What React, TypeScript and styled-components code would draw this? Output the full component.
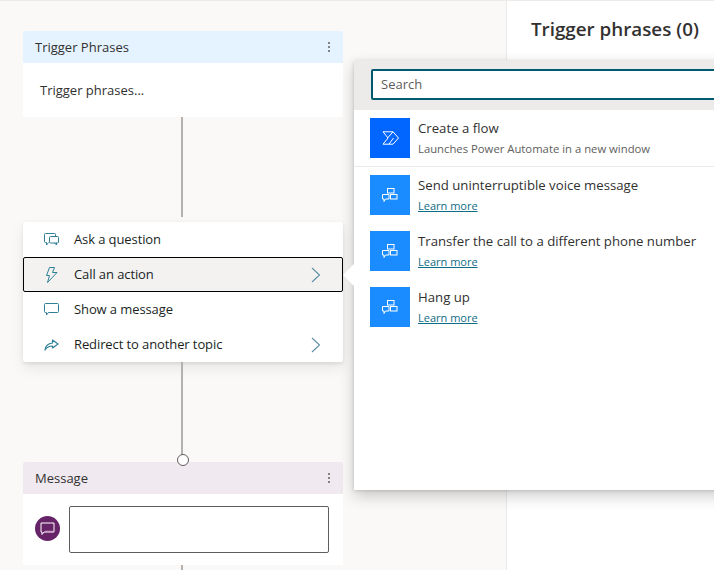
import React from "react";
import styled, { createGlobalStyle } from "styled-components";

const GlobalStyle = createGlobalStyle`
  html, body {
    margin: 0;
    padding: 0;
    height: 100%;
    overflow: hidden;
    background: #ffffff;
    font-family: "Open Sans", "Noto Sans", sans-serif;
  }
  * {
    box-sizing: border-box;
  }
`;

const Page = styled.div`
  position: relative;
  display: flex;
  width: 714px;
  height: 570px;
  overflow: hidden;
  border-top: 1px solid #edebe9;
`;

const Canvas = styled.div`
  display: flex;
  flex-direction: column;
  flex: 0 0 507px;
  padding: 30px 0 0 23px;
  background: #faf9f8;
  border-right: 1px solid #edebe9;
`;

const Card = styled.div`
  flex: none;
  width: 320px;
  background: #ffffff;
  border-radius: 2px 2px 0 0;
`;

const CardHeader = styled.div<{ $tint: string }>`
  display: flex;
  align-items: center;
  justify-content: space-between;
  height: 32px;
  padding: 0 13px 0 12px;
  background: ${(p) => p.$tint};
  border-radius: 2px 2px 0 0;
  font-size: 13px;
  color: #323130;
`;

const MoreDots = styled.span`
  display: flex;
  flex-direction: column;
  gap: 2px;
  & i {
    width: 2px;
    height: 2px;
    border-radius: 50%;
    background: #605e5c;
  }
`;

const TriggerBody = styled.div`
  height: 54px;
  padding: 18px 17px 0;
  font-size: 13px;
  line-height: 18px;
  color: #323130;
`;

const Connector = styled.div<{ $height: number; $dot?: boolean }>`
  position: relative;
  flex: none;
  width: 2px;
  height: ${(p) => p.$height}px;
  margin-left: 158px;
  background: #b3b0ad;
  ${(p) =>
    p.$dot &&
    `
    &::after {
      content: "";
      position: absolute;
      left: -4px;
      bottom: -4px;
      width: 10px;
      height: 10px;
      border-radius: 50%;
      background: #ffffff;
      border: 1px solid #605e5c;
      z-index: 1;
    }
  `}
`;

const Menu = styled.div`
  flex: none;
  width: 320px;
  margin-top: 5px;
  background: #ffffff;
  border-radius: 2px;
  box-shadow: 0 1.6px 3.6px rgba(0, 0, 0, 0.08), 0 6px 14px rgba(0, 0, 0, 0.08);
`;

const MenuRow = styled.div<{ $active?: boolean }>`
  display: flex;
  align-items: center;
  height: 35px;
  padding: 0 21px 0 20px;
  font-size: 13px;
  letter-spacing: -0.1px;
  color: #201f1e;
  border-radius: 2px;
  background: ${(p) => (p.$active ? "#f3f2f1" : "transparent")};
  border: 1px solid ${(p) => (p.$active ? "#000000" : "transparent")};
`;

const MenuIcon = styled.span`
  display: flex;
  flex: none;
  width: 30px;
  color: #2f7f96;
`;

const MenuLabel = styled.span`
  flex: 1;
  padding-bottom: 2px;
`;

const Chevron = styled.svg`
  flex: none;
  width: 10px;
  height: 16px;
  color: #5f8fa5;
`;

const MessageBody = styled.div`
  display: flex;
  align-items: center;
  gap: 9px;
  height: 71px;
  padding: 0 14px 0 12px;
`;

const Avatar = styled.span`
  display: flex;
  align-items: center;
  justify-content: center;
  flex: none;
  width: 25px;
  height: 25px;
  margin-bottom: 2px;
  border-radius: 50%;
  background: #672367;
`;

const MessageBox = styled.div`
  flex: 1;
  height: 47px;
  margin-bottom: 1px;
  border: 1px solid #605e5c;
  border-radius: 2px;
  background: #ffffff;
`;

const SidePanel = styled.div`
  flex: 1;
  padding: 13px 0 0 24px;
  background: #ffffff;
`;

const PanelTitle = styled.div`
  font-size: 18.8px;
  line-height: 30px;
  font-weight: 600;
  color: #323130;
  white-space: nowrap;
`;

const Flyout = styled.div`
  position: absolute;
  left: 354px;
  top: 59px;
  width: 400px;
  height: 430px;
  background: #ffffff;
  box-shadow: 0 6.4px 14.4px rgba(0, 0, 0, 0.2), 0 1.2px 3.6px rgba(0, 0, 0, 0.16);
  &::before {
    content: "";
    position: absolute;
    left: -11px;
    top: 204px;
    width: 0;
    height: 0;
    border-top: 11px solid transparent;
    border-bottom: 11px solid transparent;
    border-right: 11px solid #ffffff;
  }
`;

const SearchBar = styled.div`
  height: 50px;
  padding: 9px 0 0 17px;
  background: #edebe9;
`;

const SearchInput = styled.div`
  display: flex;
  align-items: center;
  height: 31px;
  padding: 0 8px 2px;
  background: #ffffff;
  border: 2px solid #005b70;
  border-radius: 2px 0 0 2px;
  font-size: 13px;
  color: #605e5c;
`;

const ActionRow = styled.div<{ $divided?: boolean }>`
  display: flex;
  gap: 8px;
  height: 56px;
  padding: 8px 0 0 16px;
  ${(p) => p.$divided && "height: 57px; border-bottom: 1px solid #edebe9;"}
`;

const ActionIcon = styled.span<{ $colour: string }>`
  display: flex;
  align-items: center;
  justify-content: center;
  flex: none;
  width: 40px;
  height: 40px;
  background: ${(p) => p.$colour};
`;

const ActionText = styled.div`
  display: flex;
  flex-direction: column;
  white-space: nowrap;
`;

const ActionTitle = styled.span`
  font-size: 13.2px;
  line-height: 20px;
  color: #323130;
`;

const ActionNote = styled.span`
  font-size: 11.3px;
  line-height: 22px;
  color: #605e5c;
`;

const LearnRow = styled.div`
  line-height: 18px;
`;

const LearnMore = styled.a`
  font-size: 11px;
  line-height: 18px;
  color: #0f6c85;
  text-decoration: underline;
`;

const AskIcon = () => (
  <svg width="15" height="13" viewBox="0 0 15 13" fill="none" stroke="currentColor" strokeWidth="1">
    <path d="M2.500 9.500H1.500a1 1 0 0 1-1-1V1.500a1 1 0 0 1 1-1h9a1 1 0 0 1 1 1v2" />
    <path d="M2.500 9.500v2.500l2-2.500" />
    <rect x="5.500" y="3.500" width="9" height="6.500" rx="1" />
    <path d="M12.500 10v2l-2-2" />
  </svg>
);

const BoltIcon = () => (
  <svg width="15" height="16" viewBox="0 0 15 16" fill="none" stroke="currentColor" strokeWidth="1" strokeLinejoin="round">
    <path d="M5.500 0.500h5l-2 5h4.500L3.500 15.500l2-7H2.500z" />
  </svg>
);

const MessageIcon = () => (
  <svg width="15" height="13" viewBox="0 0 15 13" fill="none" stroke="currentColor" strokeWidth="1">
    <path d="M1.500 0.500h12a1 1 0 0 1 1 1v7a1 1 0 0 1-1 1H4.500l-2 2.500V9.500h-1a1 1 0 0 1-1-1v-7a1 1 0 0 1 1-1z" />
  </svg>
);

const RedirectIcon = () => (
  <svg width="15" height="12" viewBox="0 0 15 12" fill="none" stroke="currentColor" strokeWidth="1.200" strokeLinejoin="round">
    <path d="M8.500 1l5.500 4-5.500 4V7C5 7 3 8 1 11c.5-4.500 3-6.500 7.500-7z" />
  </svg>
);

const ChevronRight = () => (
  <Chevron viewBox="0 0 10 16" fill="none" stroke="currentColor" strokeWidth="1.100">
    <path d="M1 1l7.500 7L1 15" />
  </Chevron>
);

const FlowIcon = () => (
  <svg width="17" height="14" viewBox="0 0 17 14" fill="none" stroke="#ffffff" strokeWidth="1">
    <path d="M1 0.800h10L16.500 7 11 13.200H1L6 7z" />
    <path d="M11 0.800L5.500 7M11.500 7L7 13" />
  </svg>
);

const NodeIcon = () => (
  <svg width="16" height="15" viewBox="0 0 16 15" fill="none" stroke="#ffffff" strokeWidth="1">
    <rect x="5.500" y="0.500" width="6.500" height="4.500" />
    <rect x="8.500" y="6.500" width="6.500" height="4.500" />
    <path d="M0.500 6.500h6.500v4.500H3.500l-1.500 2.500V11H0.500z" />
  </svg>
);

const BubbleIcon = () => (
  <svg width="15" height="14" viewBox="0 0 15 14" fill="none" stroke="#ffffff" strokeWidth="1">
    <path d="M1 1h13v9H4l-2 2.500V10H1z" />
    <path d="M5 9.500h8.500" stroke="#c79cc7" strokeWidth="1.500" />
  </svg>
);

const Dots = () => (
  <MoreDots>
    <i />
    <i />
    <i />
  </MoreDots>
);

const menuItems = [
  { label: "Ask a question", icon: <AskIcon /> },
  { label: "Call an action", icon: <BoltIcon />, active: true, more: true },
  { label: "Show a message", icon: <MessageIcon /> },
  { label: "Redirect to another topic", icon: <RedirectIcon />, more: true },
];

const actions = [
  "Send uninterruptible voice message",
  "Transfer the call to a different phone number",
  "Hang up",
];

function App() {
  return (
    <Page>
      <GlobalStyle />
      <Canvas>
        <Card>
          <CardHeader $tint="#e5f2ff">
            Trigger Phrases
            <Dots />
          </CardHeader>
          <TriggerBody>Trigger phrases...</TriggerBody>
        </Card>
        <Connector $height={100} />
        <Menu>
          {menuItems.map((item) => (
            <MenuRow key={item.label} $active={item.active}>
              <MenuIcon>{item.icon}</MenuIcon>
              <MenuLabel>{item.label}</MenuLabel>
              {item.more && <ChevronRight />}
            </MenuRow>
          ))}
        </Menu>
        <Connector $height={100} $dot />
        <Card>
          <CardHeader $tint="#f0e9f0">
            Message
            <Dots />
          </CardHeader>
          <MessageBody>
            <Avatar>
              <BubbleIcon />
            </Avatar>
            <MessageBox />
          </MessageBody>
        </Card>
        <Connector $height={6} />
      </Canvas>
      <SidePanel>
        <PanelTitle>Trigger phrases (0)</PanelTitle>
      </SidePanel>
      <Flyout>
        <SearchBar>
          <SearchInput>Search</SearchInput>
        </SearchBar>
        <ActionRow $divided>
          <ActionIcon $colour="#0066ff">
            <FlowIcon />
          </ActionIcon>
          <ActionText>
            <ActionTitle>Create a flow</ActionTitle>
            <ActionNote>Launches Power Automate in a new window</ActionNote>
          </ActionText>
        </ActionRow>
        {actions.map((title) => (
          <ActionRow key={title}>
            <ActionIcon $colour="#1a8cff">
              <NodeIcon />
            </ActionIcon>
            <ActionText>
              <ActionTitle>{title}</ActionTitle>
              <LearnRow>
                <LearnMore>Learn more</LearnMore>
              </LearnRow>
            </ActionText>
          </ActionRow>
        ))}
      </Flyout>
    </Page>
  );
}

export default App;
